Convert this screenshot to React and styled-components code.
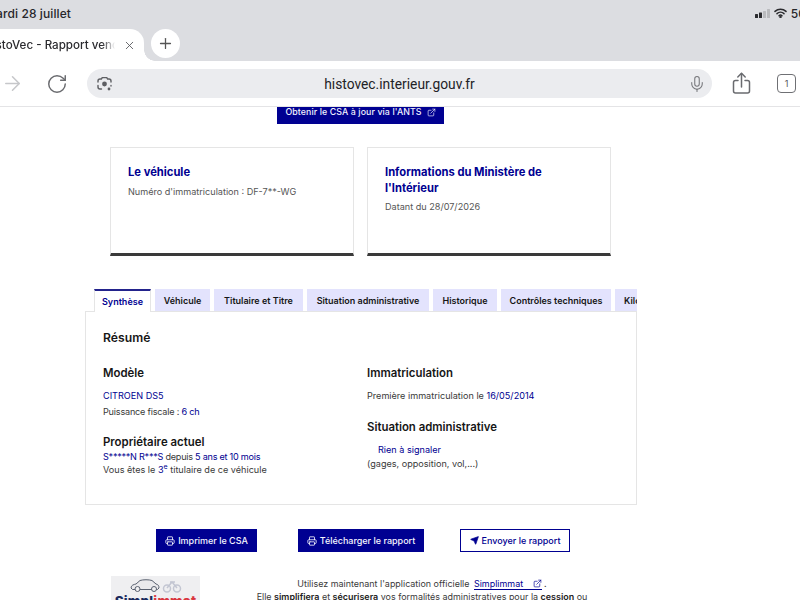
import React from 'react';
import styled, { createGlobalStyle } from 'styled-components';
import { X, Plus, ArrowRight, RotateCw, Mic, ExternalLink, Printer, Send } from 'lucide-react';

const Global = createGlobalStyle`
  html, body { margin: 0; padding: 0; background: #fff; }
  body { width: 800px; height: 600px; overflow: hidden; font-family: Inter, "Noto Sans", sans-serif; }
  * { box-sizing: border-box; }
`;
const Screen = styled.div`width: 800px; height: 600px; display: flex; flex-direction: column; overflow: hidden; background: #fff;`;
const Chrome = styled.header`height: 61px; background: #dcdde1; display: flex; flex-direction: column; flex: none;`;
const StatusBar = styled.div`height: 29px; display: flex; align-items: center; justify-content: space-between; padding-bottom: 3px; color: #26262a; font-weight: 500;`;
const DateText = styled.span`margin-left: -15px; font-size: 12px; letter-spacing: .1px;`;
const StatusIcons = styled.div`display: flex; align-items: center; gap: 4px; margin-right: -21px; font-size: 12px;`;
const TabStrip = styled.div`height: 32px; display: flex; align-items: center; gap: 7px;`;
const BrowserTab = styled.div`width: 144px; height: 32px; background: #fff; border-radius: 0 14px 0 0; position: relative; display: flex; align-items: center; color: #2a2a2e; font-size: 11.6px; font-weight: 500; white-space: nowrap;
  &::after { content: ''; position: absolute; left: 144px; bottom: 0; width: 11px; height: 11px; background: radial-gradient(circle at 100% 0, transparent 10.5px, #fff 11px); }`;
const TabTitle = styled.span`margin-left: -16px; width: 131px; overflow: hidden; white-space: nowrap; flex: none; -webkit-mask-image: linear-gradient(to right, #000 90%, transparent 100%); mask-image: linear-gradient(to right, #000 90%, transparent 100%);`;
const TabClose = styled.span`display: flex; color: #55565a; margin-left: 7.500px;`;
const NewTab = styled.div`width: 29px; height: 29px; margin-top: -4px; border-radius: 50%; background: #fff; display: flex; align-items: center; justify-content: center; color: #555; position: relative; z-index: 1;`;
const Toolbar = styled.div`height: 46px; flex: none; display: flex; align-items: center; background: #fff; border-bottom: 1px solid #e4e4e6;`;
const NavIcon = styled.span`display: flex; color: ${p => p.$c}; margin-left: ${p => p.$ml}px; flex: none;`;
const UrlPill = styled.div`width: 625px; height: 29px; margin-left: 19px; border-radius: 15px; background: #ebecef; display: flex; align-items: center; padding: 0 6px 0 9px; color: #222226; font-size: 13.8px; flex: none;`;
const UrlText = styled.span`flex: 1; text-align: center; padding-right: 2px; font-family: Roboto, Inter, sans-serif;`;
const TabCount = styled.div`width: 19px; height: 19px; margin-left: 26px; border: 1.4px solid #6f7074; border-radius: 4px; color: #55565a; font-size: 9px; display: flex; align-items: center; justify-content: center; flex: none;`;

const Main = styled.main`flex: 1; overflow: hidden; background: #fff; position: relative;`;
const Scroller = styled.div`margin-top: -10px; display: flex; flex-direction: column;`;
const TopAction = styled.a`margin-left: 277px; width: 167px; height: 27px; background: #000091; color: #f2f2ff; font-size: 8.8px; font-weight: 500; letter-spacing: .1px; display: flex; align-items: flex-end; justify-content: center; gap: 5px; padding-bottom: 7px; white-space: nowrap;`;
const Cards = styled.section`display: flex; gap: 13px; margin: 23px 0 0 110px;`;
const Card = styled.article`width: 244px; height: 109px; background: #fff; border: 1px solid #e5e5e5; border-bottom: 3px solid #3a3a3a; padding: 17px 17px 0;`;
const CardTitle = styled.h3`margin: 0 0 3px; color: #000091; font-size: 11.2px; line-height: 15.5px; font-weight: 700;`;
const CardText = styled.p`margin: 0; color: #555; font-size: 9.1px; line-height: 15px;`;

const TabsWrap = styled.section`margin: 33px 0 0 85px; width: 552px; display: flex; flex-direction: column;`;
const TabList = styled.div`height: 23px; display: flex; gap: 4px; padding-left: 9px; overflow: hidden; position: relative; z-index: 1; margin-bottom: -1px;`;
const TabItem = styled.div`height: ${p => p.$active ? 23 : 22}px; flex: none; display: flex; align-items: center; justify-content: center; width: ${p => p.$w}px; background: ${p => p.$active ? '#fff' : '#e3e3fd'}; color: ${p => p.$active ? '#000091' : '#161616'}; border-top: ${p => p.$active ? '2px solid #23238c' : 'none'}; border-left: ${p => p.$active ? '1px solid #e5e5e5' : 'none'}; border-right: ${p => p.$active ? '1px solid #e5e5e5' : 'none'}; font-size: 9px; font-weight: 600; white-space: nowrap; ${p => p.$end ? 'justify-content:flex-start;padding-left:9px;overflow:hidden;' : ''}`;
const Panel = styled.div`height: 194px; border: 1px solid #e5e5e5; padding: 17px 17px 0;`;
const PanelTitle = styled.h2`margin: 0; font-size: 12.2px; line-height: 18px; font-weight: 600; color: #161616;`;
const Columns = styled.div`display: grid; grid-template-columns: 264px 1fr; margin-top: 18px;`;
const Col = styled.div`display: flex; flex-direction: column;`;
const SubTitle = styled.h3`margin: ${p => p.$mt || 0}px 0 ${p => p.$mb || 0}px; font-size: 11.4px; line-height: 16px; font-weight: 600; color: #161616;`;
const Line = styled.p`margin: 0; padding-left: ${p => p.$pl || 0}px; font-size: 9.1px; line-height: ${p => p.$lh || 16}px; letter-spacing: ${p => p.$ls || 0}px; color: #3a3a3a; white-space: nowrap;`;
const Blue = styled.span`color: #000091; sup { font-size: 7px; line-height: 0; }`;

const Actions = styled.div`display: flex; margin: 24px 0 0 156px;`;
const Btn = styled.a`width: ${p => p.$w}px; height: 23px; margin-right: ${p => p.$mr || 0}px; display: flex; align-items: center; justify-content: center; gap: 3px; font-size: 9px; font-weight: 500; white-space: nowrap; background: ${p => p.$outline ? '#fff' : '#000091'}; color: ${p => p.$outline ? '#000091' : '#f5f5fe'}; border: ${p => p.$outline ? '1px solid #000091' : 'none'};`;
const Promo = styled.section`display: flex; margin: 24px 0 0 111px;`;
const Logo = styled.div`width: 89px; height: 60px; background: #efeff1; display: flex; flex-direction: column; align-items: center; flex: none; padding-top: 1px;`;
const LogoWord = styled.div`font-size: 13.5px; font-weight: 800; line-height: 16px; margin-top: 0; color: #1b2a5c; letter-spacing: .2px; span { color: #d9363e; }`;
const PromoText = styled.div`width: 440px; margin-left: 2px; text-align: center; color: #3a3a3a; font-size: 8.95px; line-height: 13px; padding-top: 1px; white-space: nowrap;`;
const PromoLink = styled.a`color: #000091; border-bottom: 1px solid #000091; display: inline-flex; align-items: center; gap: 10px; margin: 0 2px 0 2px; line-height: 11px;`;
const Strong = styled.b`font-weight: 600; color: #222;`;

const Signal = () => (
  <svg width="15" height="9" viewBox="0 0 15 9"><rect x="0" y="5" width="3" height="4" rx=".5" fill="#2a2a2e"/><rect x="4" y="3.5" width="3" height="5.5" rx=".5" fill="#2a2a2e"/><rect x="8" y="2" width="3" height="7" rx=".5" fill="#b9babd"/><rect x="12" y="0" width="3" height="9" rx=".5" fill="#b9babd"/></svg>
);
const Wifi = () => (
  <svg width="13" height="10" viewBox="0 0 13 10" fill="none" stroke="#2a2a2e" strokeWidth="1.5" strokeLinecap="round"><path d="M1 3.4a8 8 0 0 1 11 0"/><path d="M3 5.6a5 5 0 0 1 7 0"/><path d="M5 7.7a2.2 2.2 0 0 1 3 0"/><circle cx="6.5" cy="9" r=".5" fill="#2a2a2e"/></svg>
);
const Lens = () => (
  <svg width="17" height="17" viewBox="0 0 17 17" fill="none" stroke="#5e5f63" strokeWidth="1.4" strokeLinecap="round"><path d="M2 7V6a2 2 0 0 1 2-2h1.4l.8-1.4h4.6l.8 1.4H13a2 2 0 0 1 2 2v1"/><path d="M2 10.5V12a2 2 0 0 0 2 2h1.5"/><path d="M15 10.5V11"/><circle cx="8.5" cy="9" r="1.7" fill="#5e5f63"/><circle cx="13" cy="14" r=".7" fill="#5e5f63"/></svg>
);
const ShareIcon = () => (
  <svg width="19" height="23" viewBox="0 0 19 23" fill="none" stroke="#6a6b6f" strokeWidth="1.5" strokeLinecap="round" strokeLinejoin="round"><path d="M6 8.5H3.5a2 2 0 0 0-2 2V19a2 2 0 0 0 2 2h12a2 2 0 0 0 2-2v-8.5a2 2 0 0 0-2-2H13"/><path d="M9.5 15V1.5"/><path d="M5.8 5 9.5 1.3 13.2 5"/></svg>
);
const CarLogo = () => (
  <svg width="52" height="16" viewBox="0 0 52 16" fill="none" stroke="#59606f" strokeWidth="1"><path d="M1 11c0-3 3-3.500 5-4l4-3.500c3-1 9-1 12 0l4 3.500c2 .5 3 1.500 3 4l-1.500 1.500H2.500z" fill="#e9e9ec"/><circle cx="7.500" cy="12" r="2.500" fill="#efeff1"/><circle cx="24" cy="12" r="2.500" fill="#efeff1"/><g stroke="#c3c6d2" strokeWidth="1.500"><circle cx="37" cy="11.500" r="3.500"/><circle cx="47" cy="11.500" r="3.500"/><path d="M37 11l5-6 5 6M40 5h5"/></g></svg>
);

const tabs = [['Véhicule', 55], ['Titulaire et Titre', 89], ['Situation administrative', 122], ['Historique', 64], ['Contrôles techniques', 110]];

export default function App() {
  return (
    <Screen>
      <Global />
      <Chrome>
        <StatusBar>
          <DateText>Mardi 28 juillet</DateText>
          <StatusIcons><Signal /><Wifi /><span>50 %</span></StatusIcons>
        </StatusBar>
        <TabStrip>
          <BrowserTab><TabTitle>HistoVec - Rapport vendeur</TabTitle><TabClose><X size={13} strokeWidth={1.6} /></TabClose></BrowserTab>
          <NewTab><Plus size={17} strokeWidth={1.8} /></NewTab>
        </TabStrip>
      </Chrome>
      <Toolbar>
        <NavIcon $c="#c6c7ca" $ml={1}><ArrowRight size={23} strokeWidth={1.6} /></NavIcon>
        <NavIcon $c="#6a6b6f" $ml={22}><RotateCw size={22} strokeWidth={1.6} /></NavIcon>
        <UrlPill>
          <Lens />
          <UrlText>histovec.interieur.gouv.fr</UrlText>
          <Mic size={18} strokeWidth={1.4} color="#75767a" />
        </UrlPill>
        <NavIcon $c="#6a6b6f" $ml={20}><ShareIcon /></NavIcon>
        <TabCount>1</TabCount>
      </Toolbar>
      <Main>
        <Scroller>
          <TopAction>Obtenir le CSA à jour via l'ANTS <ExternalLink size={9} strokeWidth={1.8} /></TopAction>
          <Cards>
            <Card>
              <CardTitle>Le véhicule</CardTitle>
              <CardText>Numéro d'immatriculation : DF-7**-WG</CardText>
            </Card>
            <Card>
              <CardTitle>Informations du Ministère de l'Intérieur</CardTitle>
              <CardText>Datant du 28/07/2026</CardText>
            </Card>
          </Cards>
          <TabsWrap>
            <TabList>
              <TabItem $active $w={57}>Synthèse</TabItem>
              {tabs.map(([t, w]) => <TabItem key={t} $w={w}>{t}</TabItem>)}
              <TabItem $w={30} $end>Kilométrage</TabItem>
            </TabList>
            <Panel>
              <PanelTitle>Résumé</PanelTitle>
              <Columns>
                <Col>
                  <SubTitle $mb={7}>Modèle</SubTitle>
                  <Line><Blue>CITROEN DS5</Blue></Line>
                  <Line $ls={-0.2}>Puissance fiscale : <Blue>6 ch</Blue></Line>
                  <SubTitle $mt={14}>Propriétaire actuel</SubTitle>
                  <Line $lh={14} $ls={-0.25}><Blue>S*****N R***S</Blue> depuis <Blue>5 ans et 10 mois</Blue></Line>
                  <Line $lh={12}>Vous êtes le <Blue>3<sup>e</sup></Blue> titulaire de ce véhicule</Line>
                </Col>
                <Col>
                  <SubTitle $mb={7}>Immatriculation</SubTitle>
                  <Line>Première immatriculation le <Blue>16/05/2014</Blue></Line>
                  <SubTitle $mt={15} $mb={8}>Situation administrative</SubTitle>
                  <Line $pl={11} $lh={14}><Blue>Rien à signaler</Blue></Line>
                  <Line $lh={14}>(gages, opposition, vol,...)</Line>
                </Col>
              </Columns>
            </Panel>
          </TabsWrap>
          <Actions>
            <Btn $w={101} $mr={41}><Printer size={10} strokeWidth={2} />Imprimer le CSA</Btn>
            <Btn $w={126} $mr={36}><Printer size={10} strokeWidth={2} />Télécharger le rapport</Btn>
            <Btn $w={110} $outline><Send size={9} strokeWidth={2} fill="#000091" />Envoyer le rapport</Btn>
          </Actions>
          <Promo>
            <Logo>
              <CarLogo />
              <LogoWord>Simpl<span>immat</span></LogoWord>
            </Logo>
            <PromoText>
              Utilisez maintenant l'application officielle <PromoLink>Simplimmat <ExternalLink size={9} strokeWidth={1.8} /></PromoLink>.<br />
              Elle <Strong>simplifiera</Strong> et <Strong>sécurisera</Strong> vos formalités administratives pour la <Strong>cession</Strong> ou
            </PromoText>
          </Promo>
        </Scroller>
      </Main>
    </Screen>
  );
}
